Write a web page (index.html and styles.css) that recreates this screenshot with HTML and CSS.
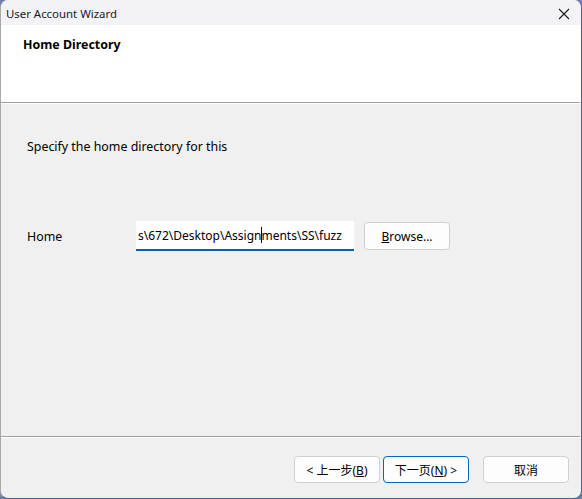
FILE: index.html
```html
<!DOCTYPE html>
<html>
<head>
<meta charset="utf-8">
<link rel="stylesheet" href="styles.css">
</head>
<body>
<div class="window">
  <div class="titlebar">
    <span class="title">User Account Wizard</span>
    <svg class="close" width="12" height="12" viewBox="0 0 12 12"><path d="M1 1 L11 11 M11 1 L1 11" stroke="#1a1a1a" stroke-width="1.1" fill="none"/></svg>
  </div>
  <div class="header">
    <div class="heading">Home Directory</div>
  </div>
  <div class="sep"></div>
  <div class="content">
    <div class="intro">Specify the home directory for this</div>
    <div class="row">
      <span class="label">Home</span>
      <div class="input"><span>s\672\Desktop\Assign</span><span class="caret"></span><span>ments\SS\fuzz</span></div>
      <button class="btn browse"><u>B</u>rowse...</button>
    </div>
  </div>
  <div class="sep"></div>
  <div class="footer">
    <button class="btn back">&lt; 上一步(<u>B</u>)</button>
    <button class="btn primary">下一页(<u>N</u>) &gt;</button>
    <button class="btn cancel">取消</button>
  </div>
</div>
</body>
</html>
```
FILE: styles.css
```css
html, body {
  margin: 0;
  padding: 0;
  background: #6f7fa8;
}
body {
  font-family: "Noto Sans", "Noto Sans CJK SC", sans-serif;
  font-size: 12.4px;
  color: #000;
}
.window {
  width: 582px;
  height: 499px;
  box-sizing: border-box;
  background: #f0f0f0;
  border-left: 1px solid #a8a8a8;
  border-right: 1px solid #4f5c9a;
  border-bottom: 1px solid #4f5c9a;
  border-radius: 8px;
  overflow: hidden;
  display: flex;
  flex-direction: column;
}
.titlebar {
  height: 25px;
  background: #f2f2f7;
  display: flex;
  align-items: center;
  justify-content: space-between;
  padding: 0 11px 0 5px;
  flex: none;
}
.title {
  font-size: 11.4px;
  color: #1a1a1a;
  margin-top: 2px;
}
.close { margin-top: 2px; }
.header {
  height: 77px;
  background: #fff;
  flex: none;
  box-sizing: border-box;
  padding: 11px 0 0 22px;
}
.heading {
  font-weight: bold;
  font-size: 12.4px;
}
.sep {
  height: 1px;
  background: #a0a0a0;
  border-bottom: 1px solid #fff;
  margin-right: 1px;
  flex: none;
}
.content {
  flex: 1;
  padding: 34px 0 0 26px;
}
.row {
  display: flex;
  align-items: center;
  margin-top: 66px;
}
.label {
  width: 109px;
  margin-top: 1px;
}
.input {
  width: 218px;
  height: 30px;
  box-sizing: border-box;
  background: #fff;
  border-bottom: 2px solid #005fb8;
  display: flex;
  align-items: center;
  padding: 0 2px;
  overflow: hidden;
  white-space: nowrap;
  font-size: 12px;
}
.caret {
  display: inline-block;
  width: 1px;
  height: 16px;
  background: #000;
  margin: 0 -1px 0 0;
}
.btn {
  font-family: "Noto Sans", "Noto Sans CJK SC", sans-serif;
  font-size: 12px;
  color: #000;
  background: #fdfdfd;
  border: 1px solid #d0d0d0;
  border-radius: 4px;
  width: 86px;
  height: 28px;
  padding: 0;
  cursor: default;
}
.browse { margin-left: 10px; }
.footer {
  height: 60px;
  flex: none;
  display: flex;
  align-items: flex-start;
  gap: 3px;
  padding: 18px 0 0 293px;
  box-sizing: border-box;
}
.footer .btn { height: 27px; }
.footer .primary { border-color: #0067c0; }
.footer .cancel { margin-left: 11px; }
```
